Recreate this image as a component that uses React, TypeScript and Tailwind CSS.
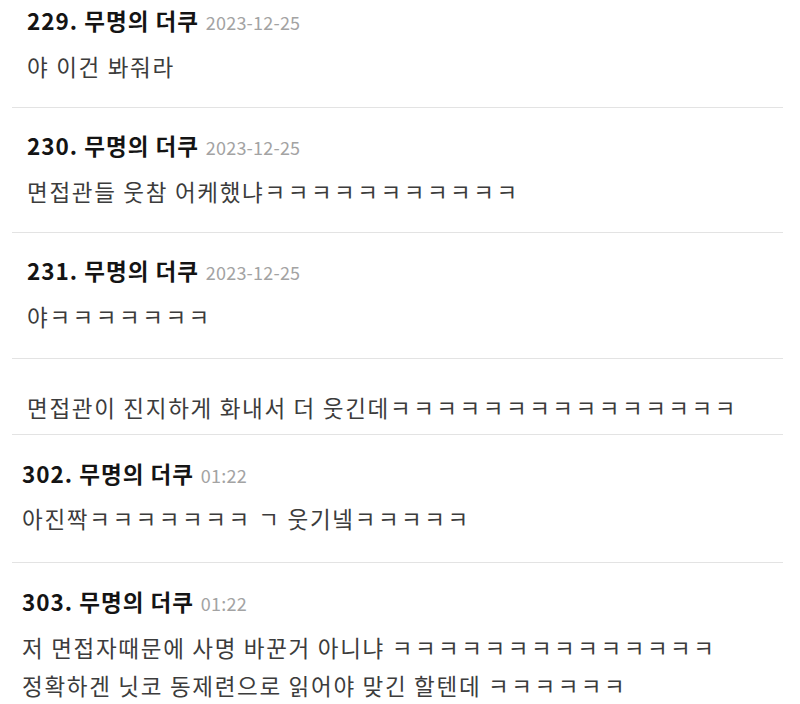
import React from "react";

type Entry = {
  num?: string;
  date?: string;
  lines: string[];
  indent: "a" | "b";
  pt: string;
  mt?: string;
  pb: string;
  leading: string;
};

const entries: Entry[] = [
  { num: "229.", date: "2023-12-25", lines: ["야 이건 봐줘라"], indent: "a", pt: "pt-[4px]", mt: "mt-[9px]", pb: "pb-[20px]", leading: "leading-[42px]" },
  { num: "230.", date: "2023-12-25", lines: ["면접관들 웃참 어케했냐ㅋㅋㅋㅋㅋㅋㅋㅋㅋㅋㅋ"], indent: "a", pt: "pt-[21px]", mt: "mt-[9px]", pb: "pb-[20px]", leading: "leading-[42px]" },
  { num: "231.", date: "2023-12-25", lines: ["야ㅋㅋㅋㅋㅋㅋㅋ"], indent: "a", pt: "pt-[21px]", mt: "mt-[9px]", pb: "pb-[21px]", leading: "leading-[42px]" },
  { lines: ["면접관이 진지하게 화내서 더 웃긴데ㅋㅋㅋㅋㅋㅋㅋㅋㅋㅋㅋㅋㅋㅋㅋ"], indent: "a", pt: "pt-[27px]", pb: "pb-[6px]", leading: "leading-[42px]" },
  { num: "302.", date: "01:22", lines: ["아진짝ㅋㅋㅋㅋㅋㅋㅋ ㄱ 웃기넼ㅋㅋㅋㅋㅋ"], indent: "b", pt: "pt-[22px]", mt: "mt-[8px]", pb: "pb-[23px]", leading: "leading-[42px]" },
  {
    num: "303.",
    date: "01:22",
    lines: [
      "저 면접자때문에 사명 바꾼거 아니냐 ㅋㅋㅋㅋㅋㅋㅋㅋㅋㅋㅋㅋㅋㅋ",
      "정확하겐 닛코 동제련으로 읽어야 맞긴 할텐데 ㅋㅋㅋㅋㅋㅋ",
    ],
    indent: "b",
    pt: "pt-[22px]",
    mt: "mt-[11px]",
    pb: "pb-0",
    leading: "leading-[38px]",
  },
];

function renderLine(l: string) {
  return l.split(/(ㅋ+)/).map((part, i) =>
    part.startsWith("ㅋ") ? (
      <span key={i} className="tracking-[2.5px]">
        {part}
      </span>
    ) : (
      <React.Fragment key={i}>{part}</React.Fragment>
    )
  );
}

function Item({ e }: { e: Entry }) {
  const pad = e.indent === "a" ? "pl-[27px]" : "pl-[22px]";
  return (
    <div className={`${pad} ${e.pt} ${e.pb}`}>
      {e.num && (
        <div className="flex items-baseline h-[32px] leading-[32px] whitespace-nowrap">
          <span className="text-[22.5px] font-bold text-[#141414] tracking-[1px]">
            {e.num} 무명의 더쿠
          </span>
          <span className="ml-[7px] text-[18px] text-[#a3a3a3] tracking-[0.2px]">{e.date}</span>
        </div>
      )}
      <div className={e.mt ?? ""}>
        {e.lines.map((l, i) => (
          <div
            key={i}
            className={`text-[22.5px] text-[#3c3c3c] whitespace-nowrap tracking-[1.7px] ${e.leading}`}
          >
            {renderLine(l)}
          </div>
        ))}
      </div>
    </div>
  );
}

export default function App() {
  return (
    <div
      className="w-[800px] h-[704px] overflow-hidden bg-white"
      style={{ fontFamily: '"Noto Sans CJK KR", "Noto Sans", sans-serif' }}
    >
      {entries.map((e, i) => (
        <React.Fragment key={i}>
          <Item e={e} />
          {i < entries.length - 1 && <div className="ml-[12px] w-[771px] h-px bg-[#e3e3e3]" />}
        </React.Fragment>
      ))}
    </div>
  );
}
